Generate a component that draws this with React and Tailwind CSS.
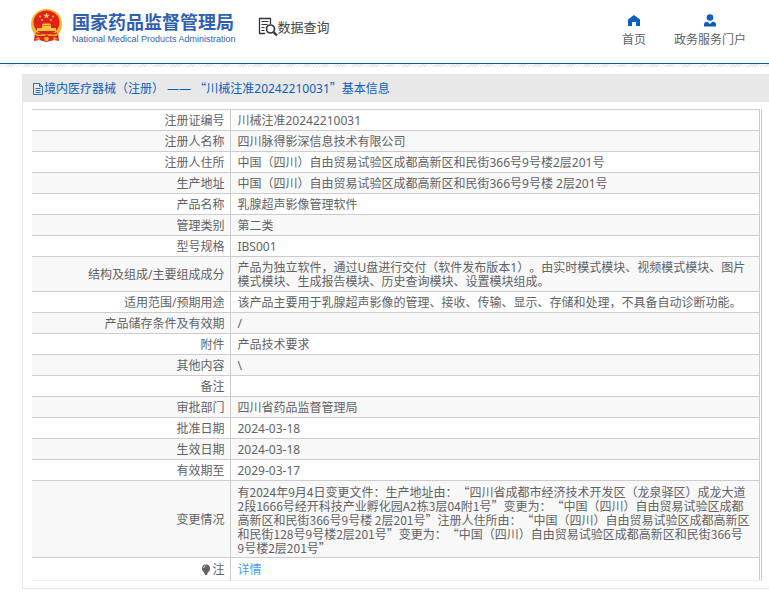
import React from "react";

const rows = [
  { label: "注册证编号", value: "川械注准20242210031" },
  { label: "注册人名称", value: "四川脉得影深信息技术有限公司" },
  { label: "注册人住所", value: "中国（四川）自由贸易试验区成都高新区和民街366号9号楼2层201号" },
  { label: "生产地址", value: "中国（四川）自由贸易试验区成都高新区和民街366号9号楼 2层201号" },
  { label: "产品名称", value: "乳腺超声影像管理软件" },
  { label: "管理类别", value: "第二类" },
  { label: "型号规格", value: "IBS001" },
  {
    label: "结构及组成/主要组成成分",
    value:
      "产品为独立软件，通过U盘进行交付（软件发布版本1）。由实时模式模块、视频模式模块、图片模式模块、生成报告模块、历史查询模块、设置模块组成。",
  },
  {
    label: "适用范围/预期用途",
    value: "该产品主要用于乳腺超声影像的管理、接收、传输、显示、存储和处理，不具备自动诊断功能。",
  },
  { label: "产品储存条件及有效期", value: "/" },
  { label: "附件", value: "产品技术要求" },
  { label: "其他内容", value: "\\" },
  { label: "备注", value: "" },
  { label: "审批部门", value: "四川省药品监督管理局" },
  { label: "批准日期", value: "2024-03-18" },
  { label: "生效日期", value: "2024-03-18" },
  { label: "有效期至", value: "2029-03-17" },
  {
    label: "变更情况",
    quoted: true,
    value: `有2024年9月4日变更文件：生产地址由：“四川省成都市经济技术开发区（龙泉驿区）成龙大道
2段1666号经开科技产业孵化园A2栋3层04附1号”变更为：“中国（四川）自由贸易试验区成都
高新区和民街366号9号楼 2层201号”注册人住所由：“中国（四川）自由贸易试验区成都高新区
和民街128号9号楼2层201号”变更为：“中国（四川）自由贸易试验区成都高新区和民街366号
9号楼2层201号”`,
  },
];

const Emblem = () => (
  <svg viewBox="0 0 33 35" className="h-[35px] w-[33px] shrink-0" aria-hidden="true">
    <path d="M5 24h23l1 9-5-1-7.500 2-7.500-2-5 1z" fill="#d8231c" />
    <path d="M16.500 1C7.500 1 1 7.500 1 16q0 8 6 12l19 0q6-4 6-12C32 7.500 25.500 1 16.500 1z" fill="#f0b72c" />
    <ellipse cx="16.500" cy="14.500" rx="13" ry="12" fill="#e0201b" />
    <path d="M16.500 4.500l.9 2.200 2.400.1-1.900 1.500.7 2.300-2.100-1.300-2.100 1.300.7-2.300-1.900-1.500 2.400-.1z" fill="#f9c93f" />
    <circle cx="10" cy="8.500" r="1" fill="#f9c93f" />
    <circle cx="12" cy="12" r="1" fill="#f9c93f" />
    <circle cx="21" cy="12" r="1" fill="#f9c93f" />
    <circle cx="23" cy="8.500" r="1" fill="#f9c93f" />
    <path d="M13 15.500h7l1 1.500h-9zM12 17.500h9v2.500h5v3H7v-3h5z" fill="#f6c63c" />
    <path d="M6 25q5 2 8 0 2.500-2 5 0 3 2 8 0" stroke="#d8231c" strokeWidth="1.500" fill="none" />
    <path d="M8 28q4 2 6 0l2.500-1 2.500 1q2 2 6 0l-3 4-5.500-2-5.500 2z" fill="#d8231c" />
    <path d="M5 31l4-2 1 3M28 31l-4-2-1 3M14 30q2.500-2 5 0l-1 3h-3z" fill="#f3b52a" />
  </svg>
);

const QueryIcon = () => (
  <svg viewBox="0 0 20 20" className="size-5 shrink-0" fill="none" stroke="#34343c" aria-hidden="true">
    <path d="M12.500 7V1.500H1.500v15H7" strokeWidth="1.300" />
    <path d="M3.500 4.500h7M3.500 7.500h6M3.500 10.500h3M3.500 13.500h3" strokeWidth="1.200" />
    <circle cx="12.500" cy="12" r="4" strokeWidth="1.700" />
    <path d="M15.500 15l3.500 3.500" strokeWidth="2.300" />
  </svg>
);

const HomeIcon = () => (
  <svg viewBox="0 0 14 14" className="size-3.5" fill="#0a5fc0" aria-hidden="true">
    <path d="M7 1L1 5.500V12h4V8h4v4h4V5.500z" />
  </svg>
);

const UserIcon = () => (
  <svg viewBox="0 0 14 14" className="size-3.5" fill="#0a5fc0" aria-hidden="true">
    <circle cx="7" cy="3.500" r="3.300" />
    <path d="M1 12.500v-2Q1 8 4.500 7.800L7 10l2.500-2.200Q13 8 13 10.500v2z" />
  </svg>
);

const FileIcon = () => (
  <svg viewBox="0 0 12 12" className="size-3 shrink-0" fill="none" stroke="#2a72c8" aria-hidden="true">
    <path d="M1.500.5h6l3 3v8h-9zM7.500.5v3h3M3.500 5.500h5M3.500 7.500h5M3.500 9.500h5" />
  </svg>
);

const BulbIcon = () => (
  <svg viewBox="0 0 10 12" className="h-3 w-2.5" fill="#606266" aria-hidden="true">
    <circle cx="5" cy="4.500" r="4" />
    <path d="M3 8h4l-1 3H4z" />
    <path d="M2.500 4Q2.800 2.300 4.500 2" stroke="#fff" strokeWidth=".8" fill="none" />
  </svg>
);

// The Latin font has narrow curly quotes, the CJK font has full width ones
const cjkFont = "font-['Noto_Sans_CJK_SC',sans-serif]";

const App = () => {
  return (
    <div className="min-h-screen bg-white font-['Noto_Sans','Noto_Sans_CJK_SC',sans-serif] text-xs text-[#606266] [text-spacing-trim:space-all]">
      <header className="flex h-16 items-start justify-between border-b border-[#0a5cad] pr-[23px] pl-[30px]">
        <div className="flex items-start">
          <a href="#home" className="flex items-start gap-[9px] pt-2 text-[#2f5fb3]">
            <Emblem />
            <span className="flex flex-col pt-1">
              <span className="text-[18px] leading-5 font-bold">国家药品监督管理局</span>
              <span className="font-['Liberation_Sans',sans-serif] text-[9px] leading-[14px]">
                National Medical Products Administration
              </span>
            </span>
          </a>
          <a href="#query" className="ml-[22px] flex items-center pt-[17px] text-[13px] leading-5 text-[#444]">
            <QueryIcon />
            数据查询
          </a>
        </div>
        <nav className="flex gap-7 pt-[14px]">
          <a href="#index" className="flex flex-col items-center gap-1">
            <HomeIcon />
            首页
          </a>
          <a href="#portal" className="flex flex-col items-center gap-1">
            <UserIcon />
            政务服务门户
          </a>
        </nav>
      </header>
      <div className="h-[3px] bg-[repeating-linear-gradient(135deg,#fff_0_1px,#e4e4e4_1px_2px)]" />

      <main className="mt-[7px] ml-[22px] border-b border-l border-[#e8e8e8]">
        <h1 className="flex h-7 items-center bg-[#e8e8e8] pt-px pl-[9px] text-[#0a5fc0]">
          <FileIcon />
          <span>
            境内医疗器械（注册） —— <span className={cjkFont}>“</span>川械注准20242210031
            <span className={cjkFont}>”</span>基本信息
          </span>
        </h1>
        <div className="mt-[7px] mr-[7px] mb-[7px] ml-[9px] border-r border-[#ccc8d4] pr-px">
          <table className="w-full border-collapse border-r border-b border-r-[#ccc] border-b-[#ebeef5] leading-[14px]">
            <tbody>
              {rows.map((row) => (
                <tr key={row.label} className="border-t border-[#ccc] even:bg-[#f8f8f8]">
                  <th className="w-[198px] border-r border-[#ccc] pt-1 pr-[5px] pb-[2px] pl-[6px] text-right font-normal">
                    {row.label}
                  </th>
                  <td
                    className={`h-5 pt-1 pr-[5px] pb-[2px] pl-[7px] whitespace-pre-line ${row.quoted ? cjkFont : ""}`}
                  >
                    {row.value}
                  </td>
                </tr>
              ))}
              <tr className="border-t border-[#ccc]">
                <th className="h-[23px] border-r border-[#ccc] pt-1 pr-[5px] pb-[2px] font-normal">
                  <span className="flex items-center justify-end gap-px">
                    <BulbIcon />注
                  </span>
                </th>
                <td className="pt-1 pb-[2px] pl-[7px]">
                  <a href="#detail" className="text-[#409eff]">
                    详情
                  </a>
                </td>
              </tr>
            </tbody>
          </table>
        </div>
      </main>
    </div>
  );
};

export default App;
